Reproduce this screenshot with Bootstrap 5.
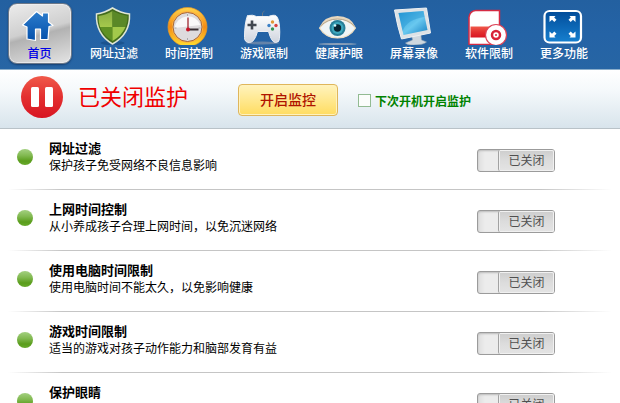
<!DOCTYPE html>
<html lang="zh-CN">
<head>
<meta charset="utf-8">
<meta name="viewport" content="width=device-width, initial-scale=1">
<title>已关闭监护</title>
<link rel="stylesheet" href="https://cdn.jsdelivr.net/npm/bootstrap@5.3.0/dist/css/bootstrap.min.css">
<style>
body{font-family:"Noto Sans CJK SC",sans-serif;font-size:12px;line-height:18px;color:#000;height:403px;overflow:hidden;background:#fff}
.topbar{height:70px;background:linear-gradient(#2360a0,#2463a6 50%,#2765a4);border-bottom:1px solid #8baecb;padding-left:1.5px}
.tab{width:75px;height:69px;color:#fff;font-size:12px;line-height:16px;font-weight:500}
.tab svg{width:75px;height:45px;display:block}
.tab.active{color:#0000e6}
.tab-face{width:64px;height:61px;margin:3px 0 0 6px;border-radius:9px;border:1px solid #6c7888;background:linear-gradient(165deg,#ececec,#cfcfcf 45%,#b2b2b2 52%,#e4e4e4);box-shadow:inset 0 0 0 1px #f2f2f4aa,0 1px 2px #153e70}
.tab-face svg{width:62px;height:41px}
.hero{height:59px;background:linear-gradient(#fff,#f5f9fb 35%,#d8e4ec);border-bottom:1px solid #b9c2c8;padding-left:20px}
.pause-icon{width:44px;height:44px;margin-top:-4px}
.state{font-size:22px;line-height:32px;color:#f00000;margin-left:14px;width:160px;margin-top:-9px}
.btn-start{width:100px;height:32px;border:1px solid #dfb65b;border-radius:4px;background:linear-gradient(#fff3bd,#ffe88f 50%,#ffdc60);color:#b01400;font-size:14px;line-height:20px;font-weight:500;box-shadow:inset 0 0 0 1px #fff2bd;margin-top:1px;padding-bottom:2px!important}
.btn-start:hover{color:#a81400;border-color:#dfb65b;background:#ffe88f}
.next-boot{margin-left:20px;color:#008200;font-weight:700;margin-top:3px}
.next-boot .form-check-input{width:13px;height:13px;border:1px solid #92bb92;border-radius:0;background-color:#fbfdfb}
.feature{height:61px;padding:0 0 0 17px}
.feature::after{content:"";position:absolute;left:8px;right:8px;bottom:0;height:1px;background:linear-gradient(90deg,#fff,#c5c5c5 9%,#c5c5c5 88%,#fff)}
.feature:last-child{height:30px;overflow:hidden}
.feature:last-child::after{display:none}
.dot{width:16px;height:16px;margin-top:20px;border-radius:50%;background:linear-gradient(#a3d080,#82b951 40%,#5a9d1c 75%,#68aa2c)}
.copy{width:428px;margin-left:16px;padding-top:9px}
.copy h2{font-size:13px;line-height:19px;font-weight:700;margin:0}
.copy p{line-height:16px}
.switch{width:78px;height:23px;margin-top:20px;border:1px solid #9b9b9b;border-radius:3px;background:linear-gradient(90deg,#dedede,#ececec 7px,#ececec);box-shadow:inset 0 1px 2px #bbb}
.knob{width:56px;height:21px;color:#505050;border:1px solid #a2a2a2;border-width:0 0 0 1px;border-radius:2px;background:linear-gradient(#cdcdcd,#dcdcdc 50%,#e4e4e4);box-shadow:inset 0 0 0 1px #f1f1f1;line-height:20px}
</style>
<script src="https://cdn.jsdelivr.net/npm/bootstrap@5.3.0/dist/js/bootstrap.bundle.min.js"></script>
</head>
<body>
<svg width="0" height="0" class="position-absolute" aria-hidden="true"><defs>
<linearGradient id="blue" x2="0" y2="1"><stop stop-color="#2c7ccb"/><stop offset="1" stop-color="#0451ac"/></linearGradient>
<linearGradient id="gl" x2="0" y2="1"><stop stop-color="#88ad42"/><stop offset="1" stop-color="#a5c94c"/></linearGradient>
<linearGradient id="gold" x2="0" y2="1"><stop stop-color="#ffd54d"/><stop offset=".5" stop-color="#f58b13"/><stop offset="1" stop-color="#ffe034"/></linearGradient>
<linearGradient id="silver" x2="0" y2="1"><stop stop-color="#fff"/><stop offset="1" stop-color="#cfd4de"/></linearGradient>
<linearGradient id="screen" x2="1" y2="1"><stop stop-color="#279bd9"/><stop offset=".55" stop-color="#69c8ef"/><stop offset="1" stop-color="#1681c4"/></linearGradient>
<linearGradient id="red" x2="0" y2="1"><stop stop-color="#f0594a"/><stop offset=".5" stop-color="#e33030"/><stop offset="1" stop-color="#d81522"/></linearGradient>
<linearGradient id="more" x2="0" y2="1"><stop stop-color="#024c99"/><stop offset="1" stop-color="#1680d0"/></linearGradient>
</defs></svg>

<nav class="topbar d-flex">
<a class="tab active text-decoration-none text-center" href="#"><span class="tab-face d-block"><svg viewBox="8.5 4 62 41"><path d="M22 25 36 11.500 42 16v-3h6v9l4.500 3.500-4 1-1 13h-7.500V29h-5v11.500l-8.500-1.500V27Z" fill="url(#blue)" stroke="#fff" stroke-width="1.200" stroke-linejoin="round"/></svg>首页</span></a>
<a class="tab text-decoration-none text-center" href="#"><svg viewBox="76.5 0 75 45"><ellipse cx="112" cy="43" rx="12" ry="2" fill="#164a80" opacity=".6"/><path d="M112 8q8 5 17 6 1 20-17 30-17-10-16-30 8-1 16-6Z" fill="#426c1d" stroke="#dfe5d6" stroke-width="1.500"/><path d="M112 11q-6 4-14 5 0 6 1.500 11H112Z" fill="url(#gl)"/><path d="M112 11q8 4 15 5 0 6-2 11H112Z" fill="#5a8827"/><path d="M99.500 27H112v14q-9-5-12.500-14Z" fill="#5f9123"/><path d="M112 27h13q-4 9-13 14Z" fill="#a3c94b"/></svg>网址过滤</a>
<a class="tab text-decoration-none text-center" href="#"><svg viewBox="151.500 0 75 45"><circle cx="187" cy="27" r="19.500" fill="url(#gold)" stroke="#e89822" stroke-width=".7"/><circle cx="187" cy="27" r="15.700" fill="#ffb13f"/><circle cx="187" cy="27" r="14.500" fill="#dedbdd" stroke="#a86735"/><path d="M174 28a13.500 13.500 0 0 1 26-3Z" fill="#fff" opacity=".8"/><path d="M187 14v2m0 22v2M174 28h2m22 0h2" stroke="#aaa"/><path d="M187.500 17.500v11.500" stroke="#9d2730" stroke-width="1.300"/><path d="M187 29.500h11" stroke="#382d31" stroke-width="2"/><circle cx="187.500" cy="29.500" r="2" fill="#c91528"/></svg>时间控制</a>
<a class="tab text-decoration-none text-center" href="#"><svg viewBox="226.500 0 75 45"><path d="M262 16q-1-4 2-5" fill="none" stroke="#66778a"/><ellipse cx="262" cy="43" rx="17" ry="1.500" fill="#7f91ab" opacity=".7"/><path d="M248 15.500q4-1 8 1h12q7-3 9 1 3 7 2 21 0 4-4 4-4 0-7-11h-11q-3 11-8 11-5 0-5-5 0-14 3-22Z" fill="url(#silver)" stroke="#eef0f4"/><path d="M251.500 20.500v9M247 25h9" stroke="#424750" stroke-width="2.600"/><circle cx="272" cy="22" r="1.700" fill="#e09735"/><circle cx="268.500" cy="25.500" r="1.700" fill="#3c80c6"/><circle cx="275.500" cy="25.500" r="1.700" fill="#d84040"/><circle cx="272" cy="29" r="1.700" fill="#359357"/></svg>游戏限制</a>
<a class="tab text-decoration-none text-center" href="#"><svg viewBox="301.500 0 75 45"><path d="M319 27q5-11 18-11 13 0 18 11-8-6-18-6-11 0-18 6Z" fill="#e6d7bf"/><path d="M319 28q7-9 18-9t18 9q-6 10-18 10t-18-10Z" fill="#eff5f6" stroke="#f1dfc1" stroke-width="1.200"/><path d="M320 26q7-7 17-7t17 7" fill="none" stroke="#b0a48e"/><circle cx="337" cy="28" r="8" fill="#277e98"/><circle cx="337" cy="28" r="6" fill="#3ca8bf"/><circle cx="337" cy="28" r="3.700" fill="#072432"/><circle cx="334.500" cy="25.500" r="1.300" fill="#d8fbff"/><ellipse cx="337" cy="44" rx="19" ry="1" fill="#8ba0b8"/></svg>健康护眼</a>
<a class="tab text-decoration-none text-center" href="#"><svg viewBox="376.500 0 75 45"><path d="m411 34 9-2 1 8 5 2q-3 3-13 3-7 0-8-2l7-3Z" fill="#ced7df" stroke="#94a6b5" stroke-width=".6"/><path d="m394 10 32-2 4 25-29 6q-4-12-7-29Z" fill="#dde2e6" stroke="#eef1f3" stroke-linejoin="round"/><path d="m398 13 25-2 4 19-24 5Z" fill="url(#screen)"/><path d="m398 13 25-2 1 6q-17 2-22 14Z" fill="#1689cb" opacity=".35"/></svg>屏幕录像</a>
<a class="tab text-decoration-none text-center" href="#"><svg viewBox="451.500 0 75 45"><path d="M475 10.500h24V44.500h-30.500V17q1-6 6.500-6.500Z" fill="#fff" stroke="#d52b43" stroke-width="1.500"/><path d="M470 26.500h26v11h-26Z" fill="url(#red)"/><circle cx="495.500" cy="35" r="10.500" fill="#fff" stroke="#dd4256" stroke-width="1.200"/><circle cx="495.500" cy="35" r="4" fill="#fff" stroke="#d82138" stroke-width="2.500"/><circle cx="495.500" cy="35" r="1" fill="#d82138"/></svg>软件限制</a>
<a class="tab text-decoration-none text-center" href="#"><svg viewBox="526.500 0 75 45"><rect x="544" y="11" width="36.500" height="31.500" rx="5" fill="url(#more)" stroke="#fff" stroke-width="2.200"/><g fill="#fff"><path d="M549 16h6l-1.300 1.500 2.300 2.300-2.200 2.200-2.300-2.300-2.500 2.300Z"/><path d="M575 16h-6l1.300 1.500-2.300 2.300 2.200 2.200 2.300-2.300 2.500 2.300Z"/><path d="M549 37.500h6l-1.300-1.500 2.300-2.300-2.200-2.200-2.300 2.300-2.500-2.300Z"/><path d="M575 37.500h-6l1.300-1.500-2.300-2.300 2.200-2.200 2.300 2.300 2.500-2.300Z"/></g></svg>更多功能</a>
</nav>

<header class="hero d-flex align-items-center">
<svg class="pause-icon" viewBox="0 0 44 44"><circle cx="22" cy="22" r="21" fill="url(#red)"/><rect x="11" y="12" width="8" height="20" rx="1.500" fill="#fff"/><rect x="25" y="12" width="8" height="20" rx="1.500" fill="#fff"/></svg>
<h1 class="state mb-0 fw-normal">已关闭监护</h1>
<button class="btn btn-start p-0" type="button">开启监控</button>
<label class="next-boot d-flex align-items-center"><input class="form-check-input m-0 me-1" type="checkbox">下次开机开启监护</label>
</header>

<main>
<section class="feature d-flex position-relative"><span class="dot"></span><div class="copy"><h2>网址过滤</h2><p class="m-0">保护孩子免受网络不良信息影响</p></div><div class="switch d-flex justify-content-end"><span class="knob text-center">已关闭</span></div></section>
<section class="feature d-flex position-relative"><span class="dot"></span><div class="copy"><h2>上网时间控制</h2><p class="m-0">从小养成孩子合理上网时间，以免沉迷网络</p></div><div class="switch d-flex justify-content-end"><span class="knob text-center">已关闭</span></div></section>
<section class="feature d-flex position-relative"><span class="dot"></span><div class="copy"><h2>使用电脑时间限制</h2><p class="m-0">使用电脑时间不能太久，以免影响健康</p></div><div class="switch d-flex justify-content-end"><span class="knob text-center">已关闭</span></div></section>
<section class="feature d-flex position-relative"><span class="dot"></span><div class="copy"><h2>游戏时间限制</h2><p class="m-0">适当的游戏对孩子动作能力和脑部发育有益</p></div><div class="switch d-flex justify-content-end"><span class="knob text-center">已关闭</span></div></section>
<section class="feature d-flex position-relative"><span class="dot flex-shrink-0"></span><div class="copy"><h2>保护眼睛</h2></div><div class="switch d-flex justify-content-end"><span class="knob text-center">已关闭</span></div></section>
</main>
</body>
</html>
